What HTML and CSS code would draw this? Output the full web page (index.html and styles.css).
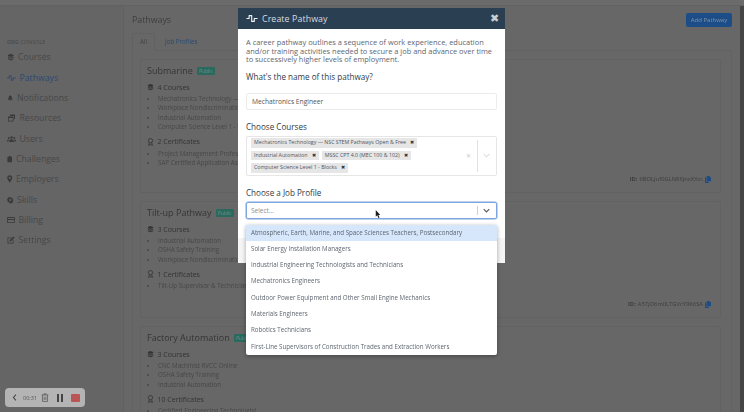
FILE: index.html
```html
<!DOCTYPE html>
<html lang="en">
<head>
<meta charset="utf-8">
<title>Create Pathway</title>
<link rel="stylesheet" href="styles.css">
</head>
<body>
<svg class="defs" width="0" height="0" aria-hidden="true">
  <symbol id="i-stack" viewBox="0 0 16 16"><path fill="currentColor" d="M8 1l6 2.600v2L8 8.200 2 5.600v-2zM2 7l6 2.600L14 7v2.200l-6 2.600-6-2.600zM2 10.600l6 2.600 6-2.600V13l-6 2.600L2 13z"/></symbol>
  <symbol id="i-pulse" viewBox="0 0 18 14"><path fill="none" stroke="currentColor" stroke-width="1.800" stroke-linejoin="round" stroke-linecap="round" d="M1 7h3.500V2.500h4v9h4V7H17"/></symbol>
  <symbol id="i-bell" viewBox="0 0 16 16"><path fill="currentColor" d="M8 1a1.300 1.300 0 0 1 1.300 1.300C11.500 3 12 5 12 7c0 2.300.8 3.300 2 4.500V12.500H2V11.500C3.200 10.300 4 9.300 4 7c0-2 .5-4 2.700-4.700A1.300 1.300 0 0 1 8 1zM6.300 13.500h3.400a1.700 1.700 0 0 1-3.400 0z"/></symbol>
  <symbol id="i-windows" viewBox="0 0 16 16"><path fill="currentColor" d="M5 1h10v9h-2V4H5zM1 5h11v10H1zm1.500 3v5.500h8V8z"/></symbol>
  <symbol id="i-users" viewBox="0 0 18 14"><circle cx="9" cy="4" r="2.500" fill="currentColor"/><circle cx="3.500" cy="5" r="1.800" fill="currentColor"/><circle cx="14.500" cy="5" r="1.800" fill="currentColor"/><path fill="currentColor" d="M4.500 13v-2c0-2 2-3.500 4.500-3.500s4.500 1.500 4.500 3.500v2zM0 12v-1.500C0 9 1.500 8 3.500 8l.4 0C3.300 9 3 10 3 12zM18 12v-1.500C18 9 16.500 8 14.500 8l-.4 0c.6 1 .9 2 .9 4z"/></symbol>
  <symbol id="i-clip" viewBox="0 0 14 16"><path fill="currentColor" d="M2 2.500h2.500a2.500 2.500 0 0 1 5 0H12a1 1 0 0 1 1 1V15a1 1 0 0 1-1 1H2a1 1 0 0 1-1-1V3.500a1 1 0 0 1 1-1z"/></symbol>
  <symbol id="i-pin" viewBox="0 0 12 16"><path fill="currentColor" fill-rule="evenodd" d="M6 0a5.500 5.500 0 0 1 5.500 5.500C11.500 9 6 16 6 16S.5 9 .5 5.500A5.500 5.500 0 0 1 6 0zm0 3.200a2.300 2.300 0 1 0 0 4.600 2.300 2.300 0 0 0 0-4.600z"/></symbol>
  <symbol id="i-gear" viewBox="-1 -1 18 18"><path fill="currentColor" fill-rule="evenodd" d="M6.500 0h3l.5 2.200 1.600.7 2-1.200 2 2.100-1.200 1.900.7 1.600 2 .6v3l-2 .5-.7 1.700 1.200 1.900-2 2-2-1.200-1.600.7-.5 2.200h-3L6 14.300l-1.700-.7-1.900 1.200-2-2 1.200-1.900-.7-1.700L-1 9V6l2-.6.700-1.600L.5 1.900l2-2.100 1.900 1.200L6 2.200zM8 5a3 3 0 1 0 0 6 3 3 0 0 0 0-6z"/></symbol>
  <symbol id="i-card" viewBox="0 0 16 14"><path fill="currentColor" fill-rule="evenodd" d="M1.500 1h13A1.500 1.500 0 0 1 16 2.500v9a1.500 1.500 0 0 1-1.500 1.500h-13A1.500 1.500 0 0 1 0 11.500v-9A1.500 1.500 0 0 1 1.500 1zM1.500 3v2h13V3zm0 4v4.500h13V7z"/></symbol>
  <symbol id="i-edit" viewBox="0 0 16 16"><path fill="currentColor" d="M1 3h8L7.500 4.500h-5v9h9V9L13 7.500V15H1zM12.500 1L15 3.500 8 10.500l-3 .6.600-3z"/></symbol>
  <symbol id="i-award" viewBox="0 0 12 16"><path fill="none" stroke="currentColor" stroke-width="1.600" d="M6 1a4.300 4.300 0 1 1 0 8.600A4.300 4.300 0 0 1 6 1zM3.500 9.500L2.200 15 6 13l3.800 2-1.300-5.500"/></symbol>
  <symbol id="i-copy" viewBox="0 0 14 16"><path fill="currentColor" d="M4 0h6l4 4v8H4zM0 3.500h3V13h6v3H0z"/></symbol>
  <symbol id="i-trash" viewBox="0 0 14 16"><path fill="none" stroke="currentColor" stroke-width="1.300" d="M1 3.500h12M5 3.500V1.500h4v2M2.500 3.500V15h9V3.500M5.500 6.500v6M8.500 6.500v6"/></symbol>
</svg>

<div class="app">
  <div class="topstrip"></div>
  <div class="shell">
    <aside class="sidebar">
      <div class="org"><b>ORG</b> CONSOLE</div>
      <nav class="nav">
        <a class="nav-item"><svg class="ico w7"><use href="#i-stack"/></svg>Courses</a>
        <a class="nav-item active"><svg class="ico w9"><use href="#i-pulse"/></svg>Pathways</a>
        <a class="nav-item"><svg class="ico w6"><use href="#i-bell"/></svg>Notifications</a>
        <a class="nav-item"><svg class="ico w9"><use href="#i-windows"/></svg>Resources</a>
        <a class="nav-item"><svg class="ico w9"><use href="#i-users"/></svg>Users</a>
        <a class="nav-item"><svg class="ico w5"><use href="#i-clip"/></svg>Challenges</a>
        <a class="nav-item"><svg class="ico w5"><use href="#i-pin"/></svg>Employers</a>
        <a class="nav-item"><svg class="ico w6"><use href="#i-gear"/></svg>Skills</a>
        <a class="nav-item"><svg class="ico w8"><use href="#i-card"/></svg>Billing</a>
        <a class="nav-item"><svg class="ico w8"><use href="#i-edit"/></svg>Settings</a>
      </nav>
    </aside>
    <main class="main">
      <div class="title-row">
        <h1 class="page-title">Pathways</h1>
        <button class="add-btn">Add Pathway</button>
      </div>
      <div class="tabs">
        <span class="tab current">All</span>
        <span class="tab link">Job Profiles</span>
      </div>
      <div class="panel">
        <section class="card first">
          <h2 class="card-title">Submarine <span class="badge">Public</span></h2>
          <h3 class="group"><svg class="gico"><use href="#i-stack"/></svg>4 Courses</h3>
          <ul class="items">
            <li>Mechatronics Technology — NSC STEM Pathways</li>
            <li>Workplace Nondiscrimination Training</li>
            <li>Industrial Automation</li>
            <li>Computer Science Level 1 - Blocks</li>
          </ul>
          <h3 class="group cert"><svg class="gico"><use href="#i-award"/></svg>2 Certificates</h3>
          <ul class="items">
            <li>Project Management Professional</li>
            <li>SAP Certified Application Associate</li>
          </ul>
          <div class="card-id"><b>ID:</b> 6BOLJuf0GLN8XjnxXXzc <svg class="copy"><use href="#i-copy"/></svg></div>
        </section>
        <section class="card second">
          <h2 class="card-title">Tilt-up Pathway <span class="badge">Public</span></h2>
          <h3 class="group"><svg class="gico"><use href="#i-stack"/></svg>3 Courses</h3>
          <ul class="items">
            <li>Industrial Automation</li>
            <li>OSHA Safety Training</li>
            <li>Workplace Nondiscrimination Training</li>
          </ul>
          <h3 class="group cert"><svg class="gico"><use href="#i-award"/></svg>1 Certificates</h3>
          <ul class="items">
            <li>Tilt-Up Supervisor &amp; Technician</li>
          </ul>
          <div class="card-id"><b>ID:</b> A57jO6m0LTGVcY9K6SA <svg class="copy"><use href="#i-copy"/></svg></div>
        </section>
        <section class="card">
          <h2 class="card-title">Factory Automation <span class="badge">Public</span></h2>
          <h3 class="group"><svg class="gico"><use href="#i-stack"/></svg>3 Courses</h3>
          <ul class="items">
            <li>CNC Machinist RVCC Online</li>
            <li>OSHA Safety Training</li>
            <li>Industrial Automation</li>
          </ul>
          <h3 class="group cert"><svg class="gico"><use href="#i-award"/></svg>10 Certificates</h3>
          <ul class="items">
            <li>Certified Engineering Technologist</li>
          </ul>
        </section>
      </div>
    </main>
    <div class="scrollbar"></div>
  </div>
</div>

<div class="overlay">
  <div class="modal">
    <header class="modal-head">
      <svg class="head-ico"><use href="#i-pulse"/></svg>
      <span class="modal-title">Create Pathway</span>
      <span class="close">✖</span>
    </header>
    <div class="modal-body">
      <p class="intro">A career pathway outlines a sequence of work experience, education and/or training activities needed to secure a job and advance over time to successively higher levels of employment.</p>
      <label class="label first-label">What's the name of this pathway?</label>
      <div class="input">Mechatronics Engineer</div>
      <label class="label courses-label">Choose Courses</label>
      <div class="multi">
        <div class="tags">
          <span class="tag">Mechatronics Technology — NSC STEM Pathways Open &amp; Free <i>✖</i></span>
          <span class="tag">Industrial Automation <i>✖</i></span>
          <span class="tag">MSSC CPT 4.0 (MEC 100 &amp; 102) <i>✖</i></span>
          <span class="tag">Computer Science Level 1 - Blocks <i>✖</i></span>
        </div>
        <span class="clear">✕</span>
        <span class="sep"></span>
        <svg class="chev pale" viewBox="0 0 10 6"><path d="M1 1l4 4 4-4" fill="none" stroke="currentColor" stroke-width="1.300"/></svg>
      </div>
      <label class="label job-label">Choose a Job Profile</label>
      <div class="select">
        <span class="placeholder">Select...</span>
        <span class="sep short"></span>
        <svg class="chev" viewBox="0 0 10 6"><path d="M1 1l4 4 4-4" fill="none" stroke="currentColor" stroke-width="1.500"/></svg>
        <svg class="cursor" viewBox="0 0 8 12"><path d="M1 0v9l2-2 1.500 3.500 1.500-.6L4.500 6.500H7z" fill="#1c1c1c"/></svg>
        <ul class="menu">
          <li class="hover">Atmospheric, Earth, Marine, and Space Sciences Teachers, Postsecondary</li>
          <li>Solar Energy Installation Managers</li>
          <li>Industrial Engineering Technologists and Technicians</li>
          <li>Mechatronics Engineers</li>
          <li>Outdoor Power Equipment and Other Small Engine Mechanics</li>
          <li>Materials Engineers</li>
          <li>Robotics Technicians</li>
          <li>First-Line Supervisors of Construction Trades and Extraction Workers</li>
        </ul>
      </div>
    </div>
    <div class="modal-foot"></div>
  </div>
</div>

<div class="recorder">
  <svg class="rec-back" viewBox="0 0 6 10"><path d="M5 1L1.500 5 5 9" fill="none" stroke="currentColor" stroke-width="1.500"/></svg>
  <span class="rec-time">00:31</span>
  <svg class="rec-trash"><use href="#i-trash"/></svg>
  <span class="rec-pause"></span>
  <span class="rec-stop"></span>
</div>
</body>
</html>
```
FILE: styles.css
```css
* { box-sizing: border-box; }
html, body { margin: 0; height: 412px; overflow: hidden; }
body { background: #676767; color: #3e3e3e; font-family: "Open Sans", "Liberation Sans", sans-serif; position: relative; }
.defs { position: absolute; }
.app { height: 412px; display: flex; flex-direction: column; filter: blur(.45px); }
.topstrip { height: 6px; flex: none; background: #6b6b6b; border-bottom: 1px solid #626262; }
.shell { flex: 1; display: flex; min-height: 0; }

.sidebar { width: 124px; flex: none; padding: 32px 0 0 7px; border-right: 1px solid #616161; background: #656565; }
.org { font-size: 5.500px; line-height: 8px; color: #4a4a4a; margin-bottom: 1px; }
.org b { font-weight: 600; }
.nav { display: flex; flex-direction: column; }
.nav-item { display: flex; align-items: center; gap: 3.500px; height: 20.350px; font-size: 8.700px; color: #474747; }
.nav-item.active { color: #2a4a72; }
.ico { height: 8px; flex: none; color: #3a3a3a; }
.ico.w5 { width: 5.500px; }
.ico.w6 { width: 6.500px; }
.ico.w7 { width: 7.500px; }
.ico.w8 { width: 8px; }
.ico.w9 { width: 9px; }
.active .ico { color: #2a4a72; }

.main { flex: 1; min-width: 0; padding: 0 8px; display: flex; flex-direction: column; }
.title-row { display: flex; justify-content: space-between; align-items: center; height: 27px; flex: none; }
.page-title { margin: 0; font-size: 8.800px; font-weight: 400; color: #3e3e3e; }
.add-btn { width: 46px; height: 14px; padding: 0; border: 0; border-radius: 2px; background: #1d4d86; color: #7f93ad; font: 6px "Open Sans", sans-serif; margin-top: 1px; }
.tabs { height: 18px; display: flex; align-items: center; border-bottom: 1px solid #616161; flex: none; }
.tab { font-size: 6.200px; padding: 0 7px; }
.tab.current { height: 18px; display: flex; align-items: center; border: 1px solid #616161; border-bottom-color: #676767; color: #444; }
.tab.link { color: #2a4a72; margin-left: 3px; }
.panel { flex: 1; min-height: 0; overflow: hidden; padding: 8px 10px 0 7px; border-left: 1px solid #636363; border-right: 1px solid #636363; }

.card { position: relative; border: 1px solid #626262; border-radius: 2px; padding: 4px 6px 0; height: 134px; margin-bottom: 8px; }
.card.second { height: 117px; }
.card-title { margin: 0; font-size: 9px; line-height: 14px; font-weight: 400; color: #353535; display: flex; align-items: center; gap: 4px; }
.badge { font-size: 4.800px; line-height: 8px; height: 8px; padding: 0 2.500px; background: #2a6a5e; color: #6d8d88; border-radius: 1px; }
.group { margin: 3.500px 0 0; font-size: 7px; line-height: 11px; font-weight: 400; color: #333; display: flex; align-items: center; gap: 3.500px; }
.group.cert { margin-top: 5px; }
.gico { width: 7px; height: 8px; color: #333; flex: none; }
.items { list-style: disc; margin: 1.500px 0 0; padding: 0 0 0 11px; font-size: 6.200px; line-height: 9.300px; color: #474747; white-space: nowrap; }
.card-id { position: absolute; right: 9px; bottom: 9px; font-size: 5.800px; line-height: 8px; color: #3d3d3d; display: flex; align-items: center; gap: 2px; }
.copy { width: 6px; height: 7px; color: #1d4d86; }
.scrollbar { width: 4px; flex: none; background: #454545; }

.overlay { position: absolute; inset: 0; display: flex; justify-content: center; align-items: flex-start; padding: 8px 1px 0 0; }
.modal { width: 267px; height: 255px; background: #fff; display: flex; flex-direction: column; position: relative; filter: blur(.35px); }
.modal-head { height: 21px; flex: none; background: #2b3f52; color: #d6dce2; display: flex; align-items: center; padding: 0 6px 0 8px; }
.head-ico { width: 12px; height: 9px; color: #eef1f4; margin-right: 4px; }
.modal-title { font-size: 8.800px; flex: 1; letter-spacing: .1px; }
.close { font-size: 10.500px; color: #c8ced4; line-height: 1; }
.modal-body { flex: 1; padding: 9px 8px 0; min-height: 0; }
.intro { margin: 0; font-size: 7.450px; line-height: 8.500px; color: #5d6670; }
.label { display: block; font-size: 8.100px; line-height: 12px; color: #2f3a45; }
.first-label { margin-top: 7px; }
.input { height: 17px; margin-top: 10px; border: 1px solid #ececec; border-radius: 2px; padding: 0 5px; font-size: 6.700px; line-height: 15px; color: #555; }
.courses-label { margin-top: 11px; }
.multi { height: 40px; margin-top: 3px; border: 1px solid #e6e6e6; border-radius: 2px; display: flex; align-items: center; padding: 2px 5px 2px 4px; }
.tags { flex: 1; display: flex; flex-wrap: wrap; gap: 3px 3px; align-content: center; padding-right: 40px; }
.tag { height: 9.500px; background: #e6e6e6; padding: 0 3px; font-size: 5.250px; line-height: 9.500px; color: #4d5560; white-space: nowrap; }
.tag i { font-style: normal; font-size: 4.500px; color: #333; margin-left: 3px; }
.clear { font-size: 6px; color: #c8c8c8; margin-right: 6px; }
.sep { width: 1px; height: 32px; background: #e2e2e2; margin-right: 5px; }
.sep.short { height: 9px; background: #cfcfcf; }
.chev { width: 7px; height: 5px; color: #c8c8c8; flex: none; margin-right: 1px; }
.job-label { margin-top: 11px; }
.select { position: relative; height: 17px; margin-top: 3px; border: 1px solid #7ea6de; border-radius: 2px; box-shadow: 0 0 0 .5px #7ea6de; display: flex; align-items: center; padding: 0 5px 0 4px; }
.select .chev { color: #555; }
.placeholder { flex: 1; font-size: 6.500px; color: #8a8f95; }
.cursor { position: absolute; left: 128px; top: 7px; width: 6px; height: 9px; }
.menu { position: absolute; left: -1px; right: -1px; top: 22px; height: 130px; margin: 0; padding: 0; list-style: none; background: #fff; border-radius: 2px; box-shadow: 0 1px 4px rgba(0,0,0,.35); z-index: 2; }
.menu li { height: 16.300px; line-height: 16.300px; padding-left: 5px; font-size: 6.200px; color: #5d6670; white-space: nowrap; }
.menu li.hover { background: #d6e6fb; }
.modal-foot { height: 25px; flex: none; background: #f5f5f5; }

.recorder { position: absolute; left: 5px; top: 388px; width: 80px; height: 19px; background: #b4b4b4; border-radius: 4px; display: flex; align-items: center; padding-left: 7px; filter: blur(.4px); }
.rec-back { width: 5px; height: 7px; color: #444; margin-right: 6px; }
.rec-time { font-size: 5.500px; color: #555; width: 14px; margin-right: 4px; }
.rec-trash { width: 8px; height: 9px; color: #555; margin-right: 8px; }
.rec-pause { width: 6px; height: 8px; border-left: 2px solid #444; border-right: 2px solid #444; margin-right: 8px; }
.rec-stop { width: 9px; height: 8px; background: #bb5555; border-radius: 1px; }
```
